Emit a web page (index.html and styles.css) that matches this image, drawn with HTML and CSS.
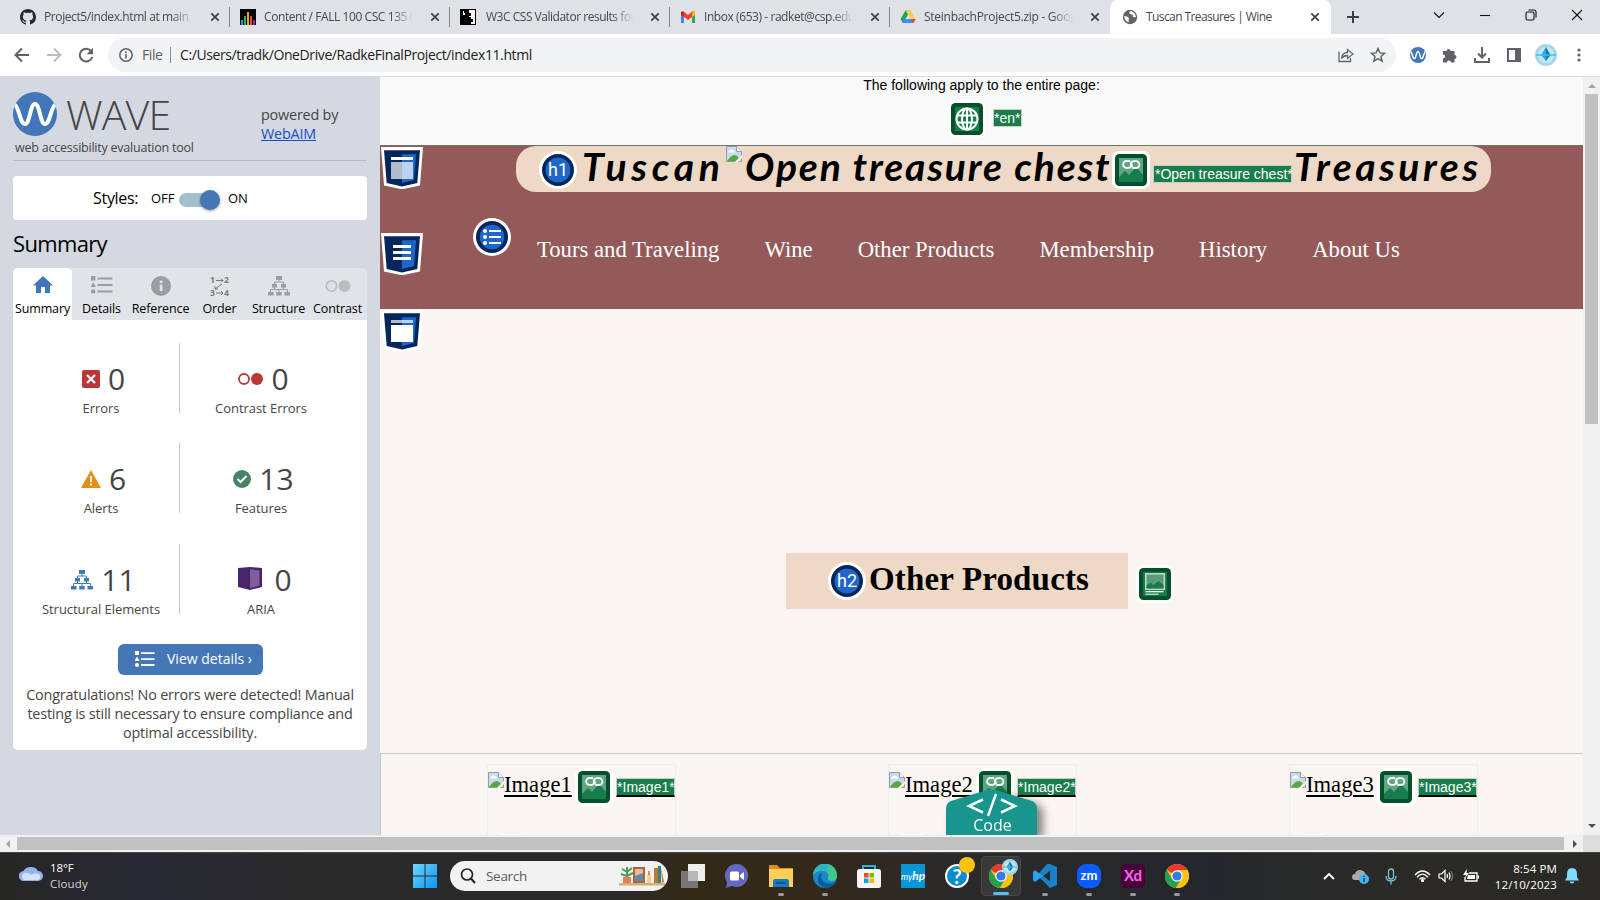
FILE: index.html
```html
<!DOCTYPE html>
<html lang="en">
<head>
<meta charset="utf-8">
<title>Tuscan Treasures | Wine</title>
<link rel="stylesheet" href="styles.css">
</head>
<body>
<svg class="defs" width="0" height="0">
  <defs>
    <symbol id="x" viewBox="0 0 10 10"><path d="M1.3 1.3l7.4 7.4M8.7 1.3l-7.4 7.4" stroke="#3c4043" stroke-width="1.7" fill="none"/></symbol>
    <symbol id="broken" viewBox="0 0 16 16"><path d="M.5.5h10l5 5v10H.5z" fill="#c6d9f5" stroke="#9a9a9a"/><path d="M10.5.5v5h5" fill="#fff" stroke="#9a9a9a"/><path d="M2 6.5q0-2 2-2 1-2 3-.5 2 0 2 2.500z" fill="#fff"/><path d="M1 15q4-6 8-6 3 1 4 3l-3 3z" fill="#53ab36"/><path d="M9 16l7-7v3l-4 4z" fill="#f9f5f0"/></symbol>
    <symbol id="linkimg" viewBox="0 0 38 38"><rect width="38" height="38" rx="7" fill="#fff"/><rect x="3" y="3" width="32" height="32" rx="4.500" fill="#03502a"/><rect x="7" y="7" width="24" height="24" fill="#5da583"/><path d="M7 26l6-6 4 4 7-8 7 8v7H7z" fill="#187d4b"/><g fill="none" stroke="#fff" stroke-width="1.800" stroke-linecap="round"><path d="M17.500 10h-3a3.400 3.400 0 000 6.800h2q2.500 0 3-2.500.5-1.800-1-2.300"/><path d="M21 17h3a3.400 3.400 0 000-6.800h-2q-2.500 0-3 2.500-.5 1.800 1 2.300"/></g></symbol>
    <symbol id="shield" viewBox="0 0 42 42"><path d="M0 0h42l-3 38.500L21 42.300 3 38.500z" fill="#fff"/><path d="M3 3.300h36L36.300 36 21 39.500 5.700 36z" fill="#03265b"/><path d="M21 7.300h14L33 33l-12 3z" fill="#1f66cb"/></symbol>
    <symbol id="list" viewBox="0 0 20 16"><path d="M0 0h4v4H0zM2 5.500l2.500 4.500h-5z"/><circle cx="2" cy="14" r="2"/><path d="M6 1.300h13.500v1.800H6zM6 7.200h13.500V9H6zM6 13.100h13.500v1.800H6z"/></symbol>
    <symbol id="tree" viewBox="0 0 22 20"><path d="M8 0h6v4H8zM4 8h5v3.500H4zM13 8h5v3.500h-5zM0 16h5.500v3.500H0zM8.200 16h5.500v3.500H8.200zM16.500 16H22v3.500h-5.500z"/><path d="M11 4v2M6.500 8V6h9v2M6.500 11v2.500M15.500 11v2.500M2.500 16v-2.500h17V16M11 13.500V16" fill="none" stroke="currentColor"/></symbol>
    <symbol id="wave" viewBox="0 0 44 44"><circle cx="22" cy="22" r="22"/><path d="M2 13C6 15 7 32 12 32s5-20 10-20 5 20 10 20 6-17 10-19" fill="none" stroke="#fff" stroke-width="4"/></symbol>
    <symbol id="chrome" viewBox="0 0 24 24"><circle cx="12" cy="12" r="12" fill="#fbc116"/><path d="M12 12L1.600 6a12 12 0 0120.800 0z" fill="#e33b2e"/><path d="M1.600 6A12 12 0 0011 24l5.500-9.500H7z" fill="#25a04c"/><path d="M22.400 6H12l4.600 8.600L11 24A12 12 0 0022.400 6z" fill="#fbc116"/><circle cx="12" cy="12" r="5.800" fill="#fff"/><circle cx="12" cy="12" r="4.600" fill="#367ce8"/></symbol>
    <symbol id="diamond" viewBox="0 0 22 22"><circle cx="11" cy="11" r="11" fill="#a9d5e9"/><circle cx="11" cy="11" r="8" fill="#c5e8f5"/><path d="M11 3l4.500 8-4.500 6-4.500-6z" fill="#1479b5"/><path d="M11 3v14l-4.500-6z" fill="#35a7da"/><path d="M1 11h20" stroke="#2bc4ee" stroke-width="1.500"/></symbol>
    <linearGradient id="wg" x2="1" y2="1"><stop offset="0" stop-color="#6fd8fc"/><stop offset="1" stop-color="#0a93f5"/></linearGradient>
  </defs>
</svg>

<div class="tabstrip">
  <div class="tab"><svg class="fav" viewBox="0 0 16 16"><path fill="#24292f" d="M8 0C3.600 0 0 3.600 0 8c0 3.500 2.300 6.500 5.500 7.600.4.100.5-.2.500-.4v-1.500c-2 .400-2.600-.5-2.700-1-.1-.2-.5-.9-.8-1.100-.3-.2-.7-.5 0-.5.600 0 1.100.6 1.200.8.700 1.200 1.900.9 2.300.7.100-.5.300-.9.500-1.100-1.800-.2-3.600-.9-3.600-4 0-.9.300-1.600.8-2.100-.1-.2-.4-1 .1-2.100 0 0 .7-.2 2.200.8a7.400 7.400 0 014 0c1.500-1 2.200-.8 2.200-.8.500 1.100.2 1.900.1 2.100.5.600.8 1.300.8 2.100 0 3.100-1.900 3.700-3.600 3.900.3.300.5.800.5 1.500v2.200c0 .2.100.5.500.4A8 8 0 0016 8c0-4.400-3.600-8-8-8z"/></svg><span class="title t1">Project5/index.html at main ·</span><svg class="close"><use href="#x"/></svg></div>
  <div class="tab"><svg class="fav" viewBox="0 0 16 16"><path d="M0 0h16v16H0z"/><path d="M1 11h2v5H1z" fill="#1ba0e6"/><path d="M4 7h2v9H4z" fill="#30b34a"/><path d="M7 3h2v13H7z" fill="#f5a21b"/><path d="M10 7h2v9h-2z" fill="#ec4c22"/><path d="M13 11h2v5h-2z" fill="#7b35b8"/></svg><span class="title t2">Content / FALL 100 CSC 135 (</span><svg class="close"><use href="#x"/></svg></div>
  <div class="tab"><svg class="fav" viewBox="0 0 16 16"><path d="M0 0h16v16H0z"/><path d="M9 1h6v14h-4v-2h2v-3h-2V8H9V6h2V4H9zM3 2h1v2h1v2H3z" fill="#fff6e8"/><path d="M8 5h3v2H9v4h4v2h-3v-2H8z"/></svg><span class="title t3">W3C CSS Validator results for</span><svg class="close"><use href="#x"/></svg></div>
  <div class="tab"><svg class="fav" viewBox="0 0 16 16"><path d="M1 3l3 2v9H1z" fill="#4285f4"/><path d="M12 5l3-2v11h-3z" fill="#34a853"/><path d="M1 3l2-1 5 4 5-4 2 1v2.500L8 11 1 5.500z" fill="#ea4335"/><path d="M12 4l2-2 1 1v3l-3 2z" fill="#fbbc04"/><path d="M1 3v3l3 2V4L2.500 2.500z" fill="#c5221f"/></svg><span class="title t4">Inbox (653) - radket@csp.edu</span><svg class="close"><use href="#x"/></svg></div>
  <div class="tab last"><svg class="fav" viewBox="0 0 16 16"><path d="M5.500 1.500h5L7.500 7 4 13.500H2.500L.5 10z" fill="#1ea362"/><path d="M5.500 1.500h5L15.500 10h-5z" fill="#ffcf48"/><path d="M3.500 10h12l-2 4h-11z" fill="#4688f4"/><path d="M11 10h4.500l-2 4z" fill="#ea4335"/><path d="M8 6l2.500 4h-5z" fill="#dee1e6"/></svg><span class="title t5">SteinbachProject5.zip - Goog</span><svg class="close"><use href="#x"/></svg></div>
  <div class="tab active"><svg class="fav" viewBox="0 0 16 16"><circle cx="8" cy="8" r="7.200" fill="#5f6368"/><path d="M2 7q3 0 5 2-1 2 0 4-4 0-5-6zM9 2q-3 1-1 3l3 1q-1 3 3 2-1-5-5-6z" fill="#fff"/></svg><span class="title t6">Tuscan Treasures | Wine</span><svg class="close"><use href="#x"/></svg></div>
  <svg class="plus" viewBox="0 0 12 12"><path d="M6 0v12M0 6h12" stroke="#3c4043" stroke-width="2"/></svg>
  <div class="wincontrols">
    <svg viewBox="0 0 12 12"><path d="M1 3.500l5 5 5-5"/></svg>
    <svg viewBox="0 0 12 12"><path d="M1 6.500h10"/></svg>
    <svg viewBox="0 0 12 12"><rect x="1" y="3" width="8" height="8" rx="1.500"/><path d="M3.500 1H9q2 0 2 2v5.500"/></svg>
    <svg viewBox="0 0 12 12"><path d="M1 1l10 10M11 1L1 11"/></svg>
  </div>
</div>

<div class="toolbar">
  <svg class="nav" viewBox="0 0 16 16"><path d="M15 8H2M8 1.500L1.500 8 8 14.500" fill="none" stroke="#5f6368" stroke-width="2"/></svg>
  <svg class="nav" viewBox="0 0 16 16"><path d="M1 8h13M8 1.500L14.500 8 8 14.500" fill="none" stroke="#bcbec1" stroke-width="2"/></svg>
  <svg class="nav" viewBox="0 0 16 16"><path d="M13.500 4.500A6.400 6.400 0 1014.300 10" fill="none" stroke="#5f6368" stroke-width="2"/><path d="M15 .8v6.400H8.600z" fill="#5f6368"/></svg>
  <div class="omnibox">
    <svg class="info" viewBox="0 0 14 14"><circle cx="7" cy="7" r="6.200" fill="none" stroke="#5f6368" stroke-width="1.500"/><path d="M6.200 6h1.600v4.500H6.200zM6.200 3.300h1.600v1.600H6.200z" fill="#5f6368"/></svg>
    <span class="file">File</span><i class="bar"></i><span class="url">C:/Users/tradk/OneDrive/RadkeFinalProject/index11.html</span>
    <svg class="share" viewBox="0 0 16 16" fill="none" stroke="#5f6368" stroke-width="1.300"><path d="M1 4.500v10h11.500V11"/><path d="M3.500 11.500q.5-6 6-6V2.500L15 7l-5.500 4.500v-3q-4 0-6 3z"/></svg>
    <svg class="star" viewBox="0 0 16 16"><path d="M8 1.500l1.900 4.400 4.700.4-3.600 3.100 1.100 4.700L8 11.600l-4.100 2.500L5 9.400 1.400 6.300l4.700-.4z" fill="none" stroke="#5f6368" stroke-width="1.500"/></svg>
  </div>
  <svg class="ext blue" viewBox="0 0 44 44"><use href="#wave"/></svg>
  <svg class="ext" viewBox="0 0 16 16"><path fill="#5f6368" d="M1 4h3.500a2 2 0 114 0H12.500v4a2 2 0 110 4v3.500H9a2 2 0 10-4 0H1V11.500a2 2 0 100-4z"/></svg>
  <svg class="ext" viewBox="0 0 16 16"><path d="M8 0v10M4 6.500l4 4 4-4M1 11v4h14v-4" fill="none" stroke="#5f6368" stroke-width="2"/></svg>
  <svg class="ext" viewBox="0 0 16 16"><path fill="#5f6368" d="M1 1h14v14H1zm2 2v10h6V3z" fill-rule="evenodd"/></svg>
  <svg class="avatar"><use href="#diamond"/></svg>
  <svg class="dots" viewBox="0 0 4 14"><circle cx="2" cy="2" r="1.600"/><circle cx="2" cy="7" r="1.600"/><circle cx="2" cy="12" r="1.600"/></svg>
</div>

<div class="viewport">
  <aside class="sidebar">
    <header class="brand">
      <div class="brandleft">
        <div class="logo"><svg class="blue"><use href="#wave"/></svg><span>WAVE</span></div>
        <div class="tagline">web accessibility evaluation tool</div>
      </div>
      <div class="powered">powered by<br><a>WebAIM</a></div>
    </header>
    <div class="styles"><span class="slabel">Styles:</span><span class="off">OFF</span><span class="toggle"><i></i></span><span class="on">ON</span></div>
    <h2 class="sumhead">Summary</h2>
    <nav class="sidetabs">
      <div class="on"><svg class="home" viewBox="0 0 20 18"><path d="M10 0l10 9.500h-3V17h-5v-6H8v6H3V9.500H0z"/></svg><b>Summary</b></div>
      <div><svg viewBox="0 0 20 18"><use href="#list" width="20" height="16"/></svg><b>Details</b></div>
      <div><svg viewBox="0 0 20 20"><circle cx="10" cy="10" r="10"/><path d="M8.700 8.500h2.800V15H8.700zM8.700 4.500h2.800v2.500H8.700z" fill="#e0e3e7"/></svg><b class="ref">Reference</b></div>
      <div><svg viewBox="0 0 20 20"><text x="0" y="7">1</text><text x="14" y="7">2</text><text x="0" y="20">3</text><text x="14" y="20">4</text><path d="M6 4.500h7M11 2.500l2 2-2 2M6 17h7M11 15l2 2-2 2M12 8l-7 5M5 10v3h3" fill="none" stroke="#77797c"/></svg><b>Order</b></div>
      <div><svg viewBox="0 0 22 20"><use href="#tree"/></svg><b>Structure</b></div>
      <div><svg class="wide" viewBox="0 0 26 14"><circle cx="6.500" cy="7" r="5.200" fill="none" stroke="#bbbdbf" stroke-width="1.700"/><circle cx="19.500" cy="7" r="6"/></svg><b>Contrast</b></div>
    </nav>
    <section class="panel">
      <div class="counts">
        <div class="cell"><div class="num"><svg width="18" height="18" viewBox="0 0 18 18"><rect width="18" height="18" rx="2" fill="#bb3637"/><path d="M5 5l8 8M13 5l-8 8" stroke="#fff" stroke-width="2.200"/></svg><span>0</span></div><p>Errors</p></div>
        <i class="rule"></i>
        <div class="cell"><div class="num"><svg width="25" height="12" viewBox="0 0 25 12"><circle cx="6" cy="6" r="5" fill="none" stroke="#bb3637" stroke-width="1.800"/><circle cx="19" cy="6" r="6" fill="#bb3637"/></svg><span>0</span></div><p>Contrast Errors</p></div>
        <div class="cell"><div class="num"><svg width="20" height="18" viewBox="0 0 20 18"><path d="M10 0l10 18H0z" fill="#e48e17"/><path d="M9 6h2v6H9zM9 13.500h2v2H9z" fill="#fff"/></svg><span>6</span></div><p>Alerts</p></div>
        <i class="rule"></i>
        <div class="cell"><div class="num"><svg width="18" height="18" viewBox="0 0 18 18"><circle cx="9" cy="9" r="9" fill="#478465"/><path d="M4.500 9l3 3 6-6" fill="none" stroke="#fff" stroke-width="2"/></svg><span>13</span></div><p>Features</p></div>
        <div class="cell"><div class="num third"><svg class="blue" width="22" height="20"><use href="#tree"/></svg><span>11</span></div><p>Structural Elements</p></div>
        <i class="rule"></i>
        <div class="cell"><div class="num third aria"><svg width="24" height="23" viewBox="0 0 24 23"><path d="M0 1l12-1 12 1v19l-12 3-12-3z" fill="#47246c"/><path d="M12 2l9.500 1.500v15L12 21z" fill="#7e5f9c"/></svg><span>0</span></div><p>ARIA</p></div>
      </div>
      <div class="viewbtn"><svg viewBox="0 0 20 16"><use href="#list"/></svg><span>View details ›</span></div>
      <div class="congrats"><p class="c1">Congratulations! No errors were detected! Manual</p><p class="c2">testing is still necessary to ensure compliance and</p><p class="c3">optimal accessibility.</p></div>
    </section>
  </aside>

  <main class="page">
    <div class="notice"><p>The following apply to the entire page:</p>
      <div class="langrow"><svg viewBox="0 0 38 38"><rect width="38" height="38" rx="7" fill="#fff"/><rect x="3" y="3" width="32" height="32" rx="4.500" fill="#03502a"/><rect x="7" y="7" width="24" height="24" fill="#187d4b"/><g fill="none" stroke="#fff" stroke-width="2"><circle cx="19" cy="19" r="10.500"/><ellipse cx="19" cy="19" rx="5" ry="10.500"/><path d="M19 8.500v21M9 15.500h20M9 22.500h20"/></g></svg><span class="alt">*en*</span></div>
    </div>
    <div class="masthead">
      <div class="landmarks">
        <svg><use href="#shield"/><path d="M10 10h22v3H10z" fill="#fff"/><path d="M10 15h11v17H10z" fill="#b2bccb"/><path d="M21 15h11v17H21z" fill="#bcd2f0"/></svg>
        <svg><use href="#shield"/><path d="M12 12h18v3H12zM12 18h18v3H12zM12 24h18v3H12z" fill="#fff"/></svg>
      </div>
      <svg class="listicon" viewBox="0 0 38 38"><circle cx="19" cy="19" r="19" fill="#fff"/><circle cx="19" cy="19" r="16" fill="#03265b"/><circle cx="19" cy="19" r="12.300" fill="#1f66cb"/><g fill="#fff"><path d="M16 12h12v2H16zM16 18h12v2H16zM16 24h12v2H16z"/><circle cx="12" cy="13" r="2"/><circle cx="12" cy="19" r="2"/><circle cx="12" cy="25" r="2"/></g></svg>
      <div class="mastbody">
        <h1 class="pill">
          <span class="badge">h1</span><span class="script w1">Tuscan</span><svg class="broken"><use href="#broken"/></svg><span class="script w2">Open treasure chest</span><svg class="lnk"><use href="#linkimg"/></svg><span class="alt altlong">*Open treasure chest*</span><span class="script w3">Treasures</span>
        </h1>
        <nav class="sitenav"><a>Tours and Traveling</a><a>Wine</a><a>Other Products</a><a>Membership</a><a>History</a><a>About Us</a></nav>
      </div>
    </div>
    <div class="hero">
      <svg class="mainmark"><use href="#shield"/><path d="M10 10h11v3H10z" fill="#b2bccb"/><path d="M21 10h11v3H21z" fill="#bcd2f0"/><path d="M10 15h22v17H10z" fill="#fff"/></svg>
      <div class="herorow">
        <h2 class="prod"><span class="badge">h2</span><span>Other Products</span></h2>
        <svg class="fig" viewBox="0 0 38 38"><rect width="38" height="38" rx="7" fill="#fff"/><rect x="3" y="3" width="32" height="32" rx="4.500" fill="#03502a"/><rect x="7" y="7" width="24" height="24" fill="#187d4b"/><rect x="9.800" y="8.800" width="18.500" height="15.500" fill="#5b9a7b" stroke="#c0dccd" stroke-width="1.500"/><path d="M10.500 23.500v-3l4-3 3 2.500 5-4 5 4v3.500z" fill="#187d4b"/><path d="M9.500 26h18v1.300h-18z" fill="#fff"/><path d="M9.500 28.500h13v1.500h-13z" fill="#a9cebb"/></svg>
      </div>
    </div>
    <div class="cards">
      <div class="card"><svg class="broken"><use href="#broken"/></svg><u>Image1</u><svg class="lnk"><use href="#linkimg"/></svg><span class="alt und">*Image1*</span><i class="peek"></i></div>
      <div class="card"><svg class="broken"><use href="#broken"/></svg><u>Image2</u><svg class="lnk"><use href="#linkimg"/></svg><span class="alt und">*Image2*</span><i class="peek"></i></div>
      <div class="card"><svg class="broken"><use href="#broken"/></svg><u>Image3</u><svg class="lnk"><use href="#linkimg"/></svg><span class="alt und">*Image3*</span><i class="peek"></i></div>
    </div>
    <div class="codebtn"><svg viewBox="0 0 91 46"><path d="M0 46V20q0-6 5-8L38 2q7-3 15 0l33 10q5 2 5 8v26z" fill="#18958d"/><path d="M37 10.500l-14 6.500 14 6.500M55 10.500l14 6.500-14 6.500M50 5l-8 22" fill="none" stroke="#fff" stroke-width="2.500"/></svg><span>Code</span></div>
  </main>
  <div class="vscroll"><svg viewBox="0 0 8 4"><path d="M0 4l4-4 4 4z" fill="#a3a3a3"/></svg><i></i><svg class="dn" viewBox="0 0 8 4"><path d="M0 0h8L4 4z" fill="#505050"/></svg></div>
</div>
<div class="hscroll"><svg viewBox="0 0 4 8"><path d="M4 0v8L0 4z" fill="#a3a3a3"/></svg><i></i><svg viewBox="0 0 4 8"><path d="M0 0v8l4-4z" fill="#505050"/></svg><b></b></div>

<div class="taskbar">
  <div class="weather"><svg viewBox="0 0 24 16"><path d="M5 16a5 5 0 01-.5-10A8 7 0 0119 6a5 5 0 010 10z" fill="#94b3ef"/><path d="M5 15a4 4 0 010-7q5-1 7 2 3-3 8-1 3 4-1 6z" fill="#d3e1fa"/></svg><div><p>18°F</p><p class="dim">Cloudy</p></div></div>
  <div class="apps">
    <div class="app"><svg viewBox="0 0 24 24"><path d="M0 0h11.500v11.500H0zM12.500 0H24v11.500H12.500zM0 12.500h11.500V24H0zM12.500 12.500H24V24H12.500z" fill="url(#wg)"/></svg></div>
    <div class="search"><svg viewBox="0 0 16 16"><circle cx="7" cy="6.500" r="5.500" fill="none" stroke="#222" stroke-width="1.700"/><path d="M11 10.500l4 4.500" stroke="#222" stroke-width="2"/></svg><span>Search</span><svg class="shelf" viewBox="0 0 46 22"><path d="M0 18h46v2.500H0z" fill="#d9ac74"/><path d="M4 12h8v6H4z" fill="#e47e5b"/><path d="M8 12V2M8 7L3 4M8 7l5-4M8 11l-6-2M8 11l6-3" stroke="#4b9b57" stroke-width="2"/><path d="M14 2h12v16H14z" fill="#a7663e"/><path d="M16 4h8v12h-8z" fill="#f3b9a0"/><path d="M16 11l8-3v8h-8z" fill="#628bad"/><path d="M28 10h4v8h-4z" fill="#f2cd96"/><path d="M30 6v4" stroke="#e68d3c" stroke-width="2"/><path d="M35 3h4v15h-4z" fill="#b97835"/><path d="M39 1h3v17h-3z" fill="#2f8580"/><path d="M42 2l3 15-2 1z" fill="#d1723f"/></svg></div>
    <div class="app"><svg viewBox="0 0 24 24"><path d="M7 0h17v17H7z" fill="#eee"/><path d="M0 7h17v17H0z" fill="#777"/><path d="M7 7h10v10H7z" fill="#b8b8b8"/></svg></div>
    <div class="app"><svg viewBox="0 0 24 24"><path d="M12 0a11.500 11.500 0 11-5 22L1 24l1-6A11.500 11.500 0 0112 0z" fill="#6667c1"/><rect x="5" y="7.500" width="9" height="9" rx="1.500" fill="#fff"/><path d="M15 11l4-3v8l-4-3z" fill="#fff"/></svg></div>
    <div class="app run"><svg viewBox="0 0 24 24"><path d="M0 1h8l3 3h13v8H0z" fill="#d79314"/><path d="M0 5h24v18H0z" fill="#fdd05a"/><path d="M4 23v-6q0-2 2-2h12q2 0 2 2v6z" fill="#1779c4"/><path d="M7 18h10v2H7z" fill="#0c549a"/></svg></div>
    <div class="app run"><svg viewBox="0 0 24 24"><circle cx="12" cy="12" r="12" fill="#1588ce"/><path d="M0 11A12 12 0 0124 12q0 5-6 5-4 0-3-3 2-5-4-7Q4 6 0 11z" fill="#41c78b"/><path d="M1 8A12 12 0 0117 1q-5 2-2 8Q7 3 1 8z" fill="#2fb1c8"/><path d="M9 9q-3 7 4 10 5 2 9-1-3 6-10 6-8-3-7-9 0-5 4-6z" fill="#125899"/></svg></div>
    <div class="app"><svg viewBox="0 0 24 24"><path d="M6 7V2h12v5" stroke="#25b2e6" stroke-width="2" fill="none"/><rect x="0" y="5" width="24" height="19" rx="2.500" fill="#f4f4f4"/><path d="M7 9h4.500v4.500H7z" fill="#ef4b24"/><path d="M12.500 9H17v4.500h-4.500z" fill="#7db900"/><path d="M7 14.500h4.500V19H7z" fill="#00a1ed"/><path d="M12.500 14.500H17V19h-4.500z" fill="#fcb700"/></svg></div>
    <div class="app hp">my<b>hp</b></div>
    <div class="app help">?<i></i></div>
    <div class="activeapp"><svg><use href="#chrome"/></svg><svg class="mini"><use href="#diamond"/></svg></div>
    <div class="app run"><svg viewBox="0 0 24 24"><path d="M17 0l7 3v18l-7 3L7 14l-5 4-2-2 14-16z" fill="#1783c6"/><path d="M0 8l2-2 15 12V6L2 18l-2-2z" fill="#2aa1ea"/><path d="M17 6.500v11L10 12z" fill="#232b31"/></svg></div>
    <div class="app run zm">zm</div>
    <div class="app run xd">Xd</div>
    <div class="app run"><svg><use href="#chrome"/></svg></div>
  </div>
  <div class="tray">
    <svg width="12" height="8" viewBox="0 0 12 8"><path d="M1 7l5-5 5 5" fill="none" stroke="#fff" stroke-width="1.800"/></svg>
    <svg width="17" height="15" viewBox="0 0 17 15"><path d="M3 11a3 3 0 010-6q1-4 5-4 5 0 6 6v4z" fill="#aaa"/><circle cx="12" cy="10" r="5" fill="#42b5f5"/><path d="M11.400 9h1.300v4h-1.300zM11.400 6.800h1.300V8h-1.300z" fill="#15334a"/></svg>
    <svg width="12" height="17" viewBox="0 0 12 17" fill="none" stroke="#6fc5d9" stroke-width="1.300"><rect x="3.500" y="1" width="5" height="10" rx="2.500"/><path d="M1 8q0 5 5 5t5-5M6 13v3.500"/></svg>
    <svg width="17" height="12" viewBox="0 0 17 12" fill="none" stroke="#fff" stroke-width="1.300"><path d="M1 5q7.500-8 15 0M3 7.200q5.500-6 11 0M5.500 9.200q3-3 6 0"/><circle cx="8.500" cy="10.500" r="1" fill="#fff"/></svg>
    <svg width="16" height="14" viewBox="0 0 16 14" fill="none" stroke="#fff" stroke-width="1.200"><path d="M1 5h2.500L7 1.500v11L3.500 9H1zM9 5q1 2 0 4M11 3.500q2 3.500 0 7"/><path d="M13 2q3 5 0 10" stroke="#777"/></svg>
    <svg width="17" height="14" viewBox="0 0 17 14"><path d="M6 4h8v8H2V8" fill="none" stroke="#fff" stroke-width="1.300"/><path d="M5 6h7v4H4zM14.500 6.500H16v3h-1.500zM4 0L0 6h3L2 9l4-5H3.500z" fill="#fff"/></svg>
    <div class="clock"><p>8:54 PM</p><p>12/10/2023</p></div>
    <svg width="14" height="16" viewBox="0 0 14 16"><path d="M7 0q5 0 5 6v3l2 3.500H0L2 9V6q0-6 5-6zM4.500 13.500h5Q9 15.500 7 15.500t-2.500-2z" fill="#80dcfa"/></svg>
  </div>
</div>
</body>
</html>
```

FILE: styles.css
```css
* { box-sizing: border-box; }
body { margin: 0; width: 1600px; height: 900px; overflow: hidden; font-family: "Open Sans", sans-serif; background: #fff; }
p, h1, h2 { margin: 0; font-weight: 400; }
svg { display: block; flex: none; }
span, p, b, a, u { white-space: nowrap; }
.defs { position: absolute; }
.blue { fill: #4176b8; color: #4176b8; }

/* browser tabs */
.tabstrip { height: 34px; background: #dee1e6; display: flex; align-items: center; padding-left: 10px; }
.tab { width: 220px; height: 34px; display: flex; align-items: center; padding-left: 10px; position: relative; }
.tab::after { content: ""; position: absolute; right: 0; top: 7px; width: 1px; height: 20px; background: #84878b; }
.tab.last::after, .tab.active::after { display: none; }
.tab.active { background: #fff; border-radius: 8px 8px 0 0; width: 221px; padding-left: 12px; }
.fav { width: 16px; height: 16px; }
.title { width: 154px; margin-left: 8px; font-size: 12px; line-height: 18px; color: #45494d; -webkit-mask-image: linear-gradient(90deg, #000 83%, transparent 97%); mask-image: linear-gradient(90deg, #000 83%, transparent 97%); }
.t1 { letter-spacing: -0.4px; }
.t2 { letter-spacing: -0.42px; }
.t3 { margin-left: 10px; width: 152px; letter-spacing: -0.48px; }
.t4 { letter-spacing: -0.43px; }
.t5 { letter-spacing: -0.27px; }
.active .title { -webkit-mask-image: none; mask-image: none; width: 152px; letter-spacing: -0.58px; }
.close { width: 10px; height: 10px; margin-left: 12px; }
.plus { width: 12px; height: 12px; margin-left: 16px; }
.wincontrols { margin: -5px 17px 0 auto; display: flex; gap: 34px; }
.wincontrols svg { width: 12px; height: 12px; fill: none; stroke: #111; stroke-width: 1.1; }

.toolbar { height: 43px; background: #fff; border-bottom: 1px solid #dadce0; display: flex; align-items: center; padding: 0 19px 0 14px; }
.nav { width: 16px; height: 16px; margin-right: 16px; }
.omnibox { width: 1288px; height: 34px; margin-left: -2px; border-radius: 17px; background: #f1f3f4; display: flex; align-items: center; padding: 0 10px 0 11px; font-size: 14px; }
.info { width: 14px; height: 14px; }
.file { width: 29px; padding-left: 9px; color: #5f6368; letter-spacing: -0.4px; margin-top: -1px; }
.bar { width: 1px; height: 16px; background: #8d9195; margin: 0 9px 0 8px; }
.url { color: #202124; flex: 1; letter-spacing: -0.4px; margin-top: -1px; }
.share, .star { width: 16px; height: 16px; margin-left: 16px; }
.ext { width: 16px; height: 16px; margin-right: 16px; }
.ext.blue { margin-left: 14px; }
.avatar { width: 22px; height: 22px; margin-left: -3px; }
.dots { width: 4px; height: 14px; margin-left: auto; fill: #5f6368; }

.viewport { display: flex; height: 758px; }
.sidebar { width: 380px; background: #d4d8e0; padding: 13px 13px 0; }
.brand { height: 71px; border-bottom: 1px solid #b5babf; display: flex; color: #454545; }
.brandleft { width: 248px; }
.logo { display: flex; align-items: center; gap: 9px; height: 48px; }
.logo svg { width: 44px; height: 44px; }
.logo span { font-size: 41px; font-weight: 300; line-height: 46px; letter-spacing: -0.8px; }
.tagline { font-size: 12.500px; line-height: 18px; margin: 1px 0 0 2px; letter-spacing: -0.23px; }
.powered { font-size: 14.400px; line-height: 19px; padding-top: 15px; letter-spacing: -0.2px; }
.powered a { color: #1550c8; text-decoration: underline; }
.styles { margin-top: 15px; height: 44px; background: #fff; border-radius: 4px; display: flex; align-items: center; padding-left: 80px; font-size: 13px; }
.slabel { font-size: 16px; width: 58px; letter-spacing: -0.3px; }
.off { width: 28px; }
.toggle { width: 34px; height: 14px; border-radius: 7px; background: #a0c1cb; margin-top: 4px; position: relative; }
.toggle i { position: absolute; right: -7px; top: -3px; width: 20px; height: 20px; border-radius: 50%; background: #4577b7; box-shadow: 0 1px 3px #0006; }
.styles .on { margin-left: 15px; }
.sumhead { font-size: 22px; line-height: 30px; margin: 8px 0 10px; letter-spacing: -0.65px; }
.sidetabs { height: 52px; display: flex; background: #e0e3e7; border-radius: 5px 5px 0 0; }
.sidetabs div { width: 59px; display: flex; flex-direction: column; align-items: center; padding-top: 8px; }
.sidetabs .on { background: #fff; border-radius: 5px 5px 0 0; }
.sidetabs svg { width: 22px; height: 20px; fill: #9b9da0; color: #9b9da0; overflow: visible; }
.sidetabs svg.wide { width: 26px; fill: #bbbdbf; }
.sidetabs svg.home { fill: #4176b8; height: 18px; margin-bottom: 2px; }
.sidetabs text { font: bold 8.500px "Open Sans"; fill: #77797c; }
.sidetabs b { font-weight: 400; font-size: 12.500px; line-height: 18px; margin-top: 4px; letter-spacing: -0.12px; }
.panel { height: 430px; background: #fff; border-radius: 0 0 5px 5px; padding-top: 23px; color: #454545; }
.counts { display: grid; grid-template-columns: 166px 1px 150px; grid-auto-rows: 70px; row-gap: 30.400px; }
.rule { background: #c4c4c4; }
.cell { text-align: center; padding: 14px 0 0 10px; }
.cell:nth-child(3n) { padding-left: 12px; }
.num { height: 42px; display: flex; align-items: center; justify-content: center; gap: 8px; font-size: 30px; padding-left: 5px; }
.num svg { margin-top: 1px; }
.third { padding-top: 2px; }
.aria { gap: 12px; padding-left: 8px; }
.aria svg { margin-top: -2px; }
.cell p { font-size: 13px; line-height: 18px; letter-spacing: -0.05px; }
.viewbtn { width: 145px; height: 31px; margin: 30px 0 0 105px; background: #4577b6; border-radius: 6px; display: flex; align-items: center; padding-left: 17px; gap: 12px; color: #fff; font-size: 14px; }
.viewbtn span { margin-top: -1px; }
.viewbtn svg { width: 20px; height: 16px; fill: #fff; }
.congrats { margin-top: 10px; text-align: center; font-size: 14.400px; line-height: 19px; letter-spacing: -0.18px; }

.page { width: 1203px; background: #f9f5f0; position: relative; overflow: hidden; font-family: "Liberation Serif", serif; }
.notice { height: 69px; background: #f9f9f9; border-bottom: 1px solid #6d7468; text-align: center; font: 14px/16px "Liberation Sans", sans-serif; }
.langrow { display: flex; align-items: center; padding: 7px 0 0 568px; gap: 6px; }
.langrow svg { width: 38px; height: 38px; }
.alt { font: 14px/16px "Liberation Sans", sans-serif; color: #fff; background: #187d4b; border: 1px solid #c6cfc6; padding: 0 1px; }
.langrow .alt { margin: -2px 0 0 1px; padding: 0 1px 0 0; }
.masthead { height: 163px; background: #945959; display: flex; }
.landmarks { width: 42px; margin-left: 1px; padding-top: 1px; display: flex; flex-direction: column; gap: 44px; }
.landmarks svg, .mainmark { width: 42px; height: 42px; }
.listicon { width: 38px; height: 38px; margin: 72px 0 0 50px; }
.mastbody { margin-left: 5px; }
.pill { width: 975px; height: 46px; background: #edd9c6; border-radius: 20px; display: flex; align-items: flex-start; padding-left: 23px; }
.badge { width: 38px; height: 38px; border-radius: 50%; border: 3px solid #fff; background: radial-gradient(circle, #1f66cb 0 12px, #03265b 12.800px); color: #fff; font: 18px/32px Roboto, sans-serif; text-align: center; letter-spacing: 0; flex: none; }
.pill .badge { margin-top: 5px; }
.script { font: italic 700 39px/46px Lato, cursive; margin-top: -3px; flex: none; }
.w1 { width: 144px; margin-left: 5px; letter-spacing: 4.700px; }
.w2 { width: 368px; margin-left: 3px; letter-spacing: 1.850px; }
.w3 { margin-left: 2px; letter-spacing: 3.500px; }
.broken { width: 16px; height: 16px; }
.lnk { width: 38px; height: 38px; }
.pill .lnk { margin: 5px 0 0 -1px; }
.altlong { margin: 19px 0 0 3px; width: 139px; }
.sitenav { display: flex; gap: 45px; padding: 45px 0 0 21px; color: #fff; font-size: 22.700px; line-height: 26px; }
.hero { height: 445px; border-bottom: 1px solid #c9c9c9; padding-top: 1px; }
.mainmark { margin-left: 1px; }
.herorow { display: flex; margin: 201px 0 0 406px; }
.prod { width: 342px; height: 56px; background: #edd9c6; display: flex; padding: 9px 0 0 42px; font-size: 33px; font-weight: 700; letter-spacing: .16px; line-height: 34px; }
.prod span:last-child { margin-left: 3px; }
.fig { width: 38px; height: 38px; margin: 12px 0 0 8px; }
.cards { display: flex; gap: 212px; padding: 10px 0 0 106px; border-left: 1px solid #c9c9c9; height: 82px; }
.card { width: 189px; height: 90px; border: 1px solid #eee; display: flex; align-items: flex-start; flex: none; padding-top: 7px; font-size: 22.600px; line-height: 25px; position: relative; }
.card u { width: 71px; text-underline-offset: 3px; text-decoration-thickness: 2px; }
.card .lnk { margin-top: -4px; }
.und { margin: 6px 0 0 3px; width: 59px; border-bottom: 2px solid #000; padding: 0; letter-spacing: .02px; }
.peek { position: absolute; left: 8px; top: 69px; width: 30px; height: 6px; border-radius: 6px 6px 0 0; background: #fff; }
.codebtn { position: absolute; left: 566px; top: 712px; width: 91px; height: 46px; filter: drop-shadow(6px 4px 4px #0007); }
.codebtn span { position: absolute; left: 1px; width: 91px; top: 26px; text-align: center; color: #fff; font: 16px/20px "Open Sans", sans-serif; }

.vscroll { width: 17px; background: #f1f1f1; display: flex; flex-direction: column; align-items: center; padding: 7px 0; }
.vscroll svg { width: 8px; height: 4px; }
.vscroll i { width: 13px; height: 330px; margin-top: 6px; background: #c1c1c1; }
.vscroll .dn { margin-top: auto; }
.hscroll { height: 17px; background: #f1f1f1; display: flex; align-items: center; padding-left: 6px; }
.hscroll svg { width: 4px; height: 8px; }
.hscroll i { width: 1547px; height: 13px; margin: 0 9px 0 7px; background: #c1c1c1; }
.hscroll b { width: 17px; height: 17px; background: #dcdcdc; margin-left: auto; }

.taskbar { height: 48px; border-top: 1px solid #454545; background: linear-gradient(90deg, #262724, #282833 9%, #2a2a2a 20%, #292929 38%, #332917 43%, #33281a 51%, #2a2a2a 60%, #24272b 75%, #2b2a26 88%); display: flex; color: #fff; font-size: 11.500px; line-height: 16px; }
.weather { width: 413px; display: flex; padding: 7px 0 0 19px; gap: 7px; }
.weather svg { width: 24px; height: 16px; margin-top: 5px; }
.weather p { letter-spacing: -0.1px; }
.weather .dim { color: #d4d4d4; letter-spacing: .15px; }
.apps { display: flex; align-items: center; gap: 20px; height: 46px; }
.app { width: 24px; height: 24px; position: relative; text-align: center; flex: none; }
.app svg { width: 24px; height: 24px; }
.run::after { content: ""; position: absolute; left: 9px; bottom: -8px; width: 6px; height: 3px; border-radius: 2px; background: #999; }
.search { width: 218px; height: 30px; border-radius: 15px; background: #f2f2f2; display: flex; align-items: center; padding: 0 3px 0 10px; margin: 0 -7px; color: #5a5a5a; font-size: 13.500px; }
.search svg { width: 16px; height: 16px; }
.search span { margin-left: 10px; letter-spacing: -0.3px; }
.search .shelf { width: 46px; height: 22px; margin-left: auto; }
.hp { background: #0696d6; font: italic 9px/24px Lato, sans-serif; }
.hp b { font-size: 12px; }
.help { border-radius: 50%; background: #0d8ccc; border: 2px solid #fff; font: bold 20px/20px Lato, sans-serif; }
.help i { position: absolute; right: -8px; top: -9px; width: 16px; height: 16px; border-radius: 50%; background: #ffc20e; }
.activeapp { width: 40px; height: 40px; border-radius: 4px; background: #393939; border: 1px solid #484848; margin: 0 -8px; padding: 7px; position: relative; }
.activeapp::after { content: ""; position: absolute; left: 11px; bottom: 0; width: 16px; height: 3px; border-radius: 2px; background: #55bdf2; }
.activeapp svg { width: 24px; height: 24px; }
.activeapp .mini { position: absolute; left: 20px; top: 2px; width: 16px; height: 16px; }
.zm { background: #0b5cff; border-radius: 9px; font: bold 13px/22px Lato, sans-serif; }
.xd { background: #470137; color: #ff61f6; border-radius: 5px; font: bold 15px/23px Lato, sans-serif; }
.tray { margin-left: auto; display: flex; align-items: center; padding-right: 21px; gap: 9px; height: 46px; }
.tray svg:nth-child(1) { margin-right: 8px; }
.tray svg:nth-child(2) { margin-right: 7px; }
.tray svg:nth-child(3) { margin-right: 8px; }
.tray svg:nth-child(4) { margin-right: -2px; }
.clock { text-align: right; width: 68px; letter-spacing: .12px; padding-top: 1px; margin-right: -1px; }
```
